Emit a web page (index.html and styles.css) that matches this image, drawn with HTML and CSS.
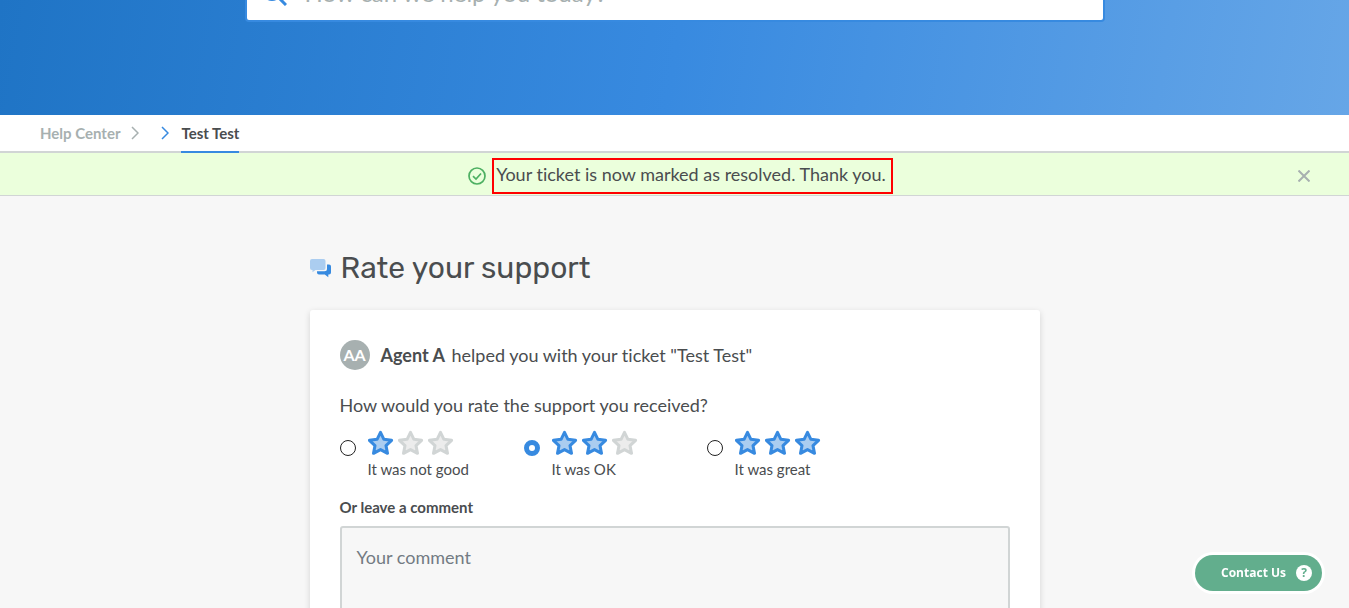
FILE: index.html
```html
<!DOCTYPE html>
<html lang="en">
<head>
<meta charset="utf-8">
<meta name="viewport" content="width=device-width, initial-scale=1">
<title>Rate your support</title>
<link rel="stylesheet" href="styles.css">
</head>
<body>
<svg class="symbols" aria-hidden="true">
  <symbol id="star" viewBox="0 0 26 26">
    <path d="M12.500 2.300l3.400 7 7.700 1-5.600 5.300 1.500 7.700-7-3.700-7 3.700 1.500-7.700-5.600-5.300 7.700-1z" stroke-width="3" stroke-linejoin="round"/>
  </symbol>
</svg>
<header class="hero">
  <form class="search">
    <svg class="search-icon" viewBox="0 0 26 26" aria-hidden="true"><circle cx="11" cy="11" r="8.500" fill="none" stroke="currentColor" stroke-width="3"/><path d="M17 17l8 8" stroke="currentColor" stroke-width="3"/></svg>
    <input class="search-input" type="search" aria-label="Search" placeholder="How can we help you today?">
  </form>
</header>
<nav class="crumbs" aria-label="Breadcrumb">
  <a class="crumb" href="#">Help Center</a>
  <svg class="chevron" viewBox="0 0 8 14" aria-hidden="true"><path d="M1 1l6 6-6 6"/></svg>
  <svg class="chevron chevron-active" viewBox="0 0 8 14" aria-hidden="true"><path d="M1 1l6 6-6 6"/></svg>
  <a class="crumb crumb-current" href="#" aria-current="page">Test Test</a>
</nav>
<div class="notice" role="status">
  <svg class="notice-icon" viewBox="0 0 18 18" aria-hidden="true"><circle cx="9" cy="9" r="8"/><path d="M5 9.200l3 2.800 5-5.500"/></svg>
  <p class="notice-text">Your ticket is now marked as resolved. Thank you.</p>
  <button class="notice-close" type="button" aria-label="Close"><svg viewBox="0 0 12 12"><path d="M0.500 0.500l11 11M11.500 0.500L0.500 11.500"/></svg></button>
</div>
<main class="content">
  <h1 class="title">
    <svg class="title-icon" viewBox="0 0 22 19" aria-hidden="true"><path fill="#abcdf0" d="M2 0h11.500a2 2 0 0 1 2 2v7a2 2 0 0 1-2 2H5.500L2.500 13.300V11H2a2 2 0 0 1-2-2V2a2 2 0 0 1 2-2z"/><path fill="#378ae0" d="M17 5.500h2a2 2 0 0 1 2 2V13.500a2 2 0 0 1-2 2h-.7v2.700L14.800 15.500H9a2 2 0 0 1-2-2v-1.300h7.500a2.500 2.500 0 0 0 2.500-2.500z"/></svg>
    Rate your support
  </h1>
  <form class="card">
    <p class="agent"><span class="avatar" aria-hidden="true">AA</span><span class="agent-line"><strong>Agent A</strong> helped you with your ticket "Test Test"</span></p>
    <fieldset class="rating">
      <legend class="question">How would you rate the support you received?</legend>
      <div class="options">
        <label class="option">
          <input class="radio" type="radio" name="rating" value="1">
          <span class="option-body">
            <span class="stars"><svg class="star star-on"><use href="#star"/></svg><svg class="star"><use href="#star"/></svg><svg class="star"><use href="#star"/></svg></span>
            <span class="option-text">It was not good</span>
          </span>
        </label>
        <label class="option">
          <input class="radio" type="radio" name="rating" value="2" checked>
          <span class="option-body">
            <span class="stars"><svg class="star star-on"><use href="#star"/></svg><svg class="star star-on"><use href="#star"/></svg><svg class="star"><use href="#star"/></svg></span>
            <span class="option-text">It was OK</span>
          </span>
        </label>
        <label class="option">
          <input class="radio" type="radio" name="rating" value="3">
          <span class="option-body">
            <span class="stars"><svg class="star star-on"><use href="#star"/></svg><svg class="star star-on"><use href="#star"/></svg><svg class="star star-on"><use href="#star"/></svg></span>
            <span class="option-text">It was great</span>
          </span>
        </label>
      </div>
    </fieldset>
    <label class="comment-label" for="comment">Or leave a comment</label>
    <textarea class="comment" id="comment" placeholder="Your comment"></textarea>
  </form>
</main>
<button class="contact" type="button">Contact Us <span class="contact-mark">?</span></button>
</body>
</html>
```

FILE: styles.css
```css
* { box-sizing: border-box; }
html { height: 100%; }
body {
  height: 100%;
  margin: 0;
  overflow: hidden;
  background: #f7f7f7;
  color: #4a4d4f;
  font: 18px/26px Lato, "Liberation Sans", sans-serif;
  font-variant-ligatures: none;
}
p, h1, fieldset { margin: 0; padding: 0; }
a { color: inherit; text-decoration: none; }
button { border: 0; padding: 0; cursor: pointer; }
.symbols { display: none; }

.hero {
  display: flex;
  justify-content: center;
  padding: 0 24px 93px;
  background: linear-gradient(100deg, #1f74c5, #388ae0 50%, #66a6e7);
}
.search {
  display: flex;
  flex: 0 1 860px;
  align-items: center;
  gap: 18px;
  height: 58px;
  margin-top: -36px;
  padding: 0 14px;
  background: #fff;
  border: 2px solid #378ae0;
  border-radius: 4px;
}
.search-icon { width: 26px; height: 26px; color: #378ae0; }
.search-input {
  flex: 1;
  min-width: 0;
  padding: 0;
  border: 0;
  outline: 0;
  background: none;
  font: 24px/32px Lato, sans-serif;
}
.search-input::placeholder { color: #a7b0b0; }

.crumbs {
  display: flex;
  align-items: center;
  padding: 0 40px;
  background: #fff;
  border-bottom: 2px solid #d1d5d5;
  font-size: 15px;
  font-weight: 700;
  line-height: 36px;
}
.crumb { color: #a7b0b0; }
.crumb-current {
  margin: 0 0 -2px 12px;
  border-bottom: 2px solid #378ae0;
  color: #4a4d4f;
}
.chevron {
  width: 8px;
  height: 14px;
  margin-left: 11px;
  fill: none;
  stroke: #a7b0b0;
  stroke-width: 1.5;
}
.chevron-active { margin-left: 22px; stroke: #378ae0; }

.notice {
  position: relative;
  display: flex;
  justify-content: center;
  align-items: center;
  gap: 6px;
  padding: 5px 48px 1px 60px;
  background: #ebffdc;
  border-bottom: 1px solid #d1d5d5;
}
.notice-icon { width: 18px; height: 18px; fill: none; stroke: #4db062; stroke-width: 1.7; }
.notice-text {
  padding: 1px 5px 5px 2px;
  border: 2px solid #f00;
}
.notice-close {
  position: absolute;
  top: 17px;
  right: 39px;
  display: flex;
  background: none;
}
.notice-close svg { width: 12px; height: 12px; stroke: #a7b0b0; stroke-width: 2; }

.content { max-width: 730px; margin: 0 auto; padding-top: 52px; }
.title {
  display: flex;
  align-items: center;
  gap: 9px;
  font: 400 30px/40px Rubik, Roboto, sans-serif;
}
.title-icon { width: 22px; height: 19px; }
.card {
  margin-top: 22px;
  padding: 30px 30px 40px;
  background: #fff;
  border-radius: 3px;
  box-shadow: 0 2px 6px rgba(0, 0, 0, .15);
}
.agent { display: flex; align-items: center; gap: 11px; }
.agent strong { margin-right: 2px; }
.avatar {
  width: 30px;
  height: 30px;
  border-radius: 50%;
  background: #a7b0b0;
  color: #fff;
  font-size: 16px;
  font-weight: 700;
  line-height: 30px;
  text-align: center;
}
.rating { margin-top: 22px; border: 0; }
.question { padding: 0; }
.options { display: grid; grid-template-columns: 184px 183px 1fr; padding-top: 12px; }
.option { display: flex; align-items: center; gap: 12px; }
.radio {
  appearance: none;
  width: 16px;
  height: 16px;
  margin: 0;
  margin-top: -16px;
  border: 1px solid #222;
  border-radius: 50%;
  background: #fff;
}
.radio:checked { border: 5px solid #378ae0; }
.option-body { display: flex; flex-direction: column; }
.stars { display: flex; gap: 4px; }
.star { width: 26px; height: 26px; fill: #ececec; stroke: #d1d5d5; }
.star-on { fill: #abcdf0; stroke: #378ae0; }
.option-text { font-size: 15px; line-height: 26px; }
.comment-label {
  display: block;
  margin-top: 13px;
  font-size: 15px;
  font-weight: 700;
  line-height: 24px;
}
.comment {
  display: block;
  width: 100%;
  height: 160px;
  margin-top: 7px;
  padding: 16px 15px;
  border: 2px solid #d1d5d5;
  border-radius: 3px;
  background: #f7f7f7;
  font: 18px/26px Lato, sans-serif;
  resize: none;
}
.comment::placeholder { color: #737b83; }

.contact {
  position: fixed;
  right: 27px;
  bottom: 17px;
  display: flex;
  align-items: center;
  gap: 10px;
  padding: 10px 10px 10px 26px;
  border-radius: 18px;
  background: #62ae8d;
  box-shadow: 0 0 0 3px #fff;
  color: #fff;
  font: 700 12px/16px "Open Sans", sans-serif;
}
.contact-mark {
  width: 16px;
  border-radius: 50%;
  background: #fff;
  color: #62ae8d;
}
```
